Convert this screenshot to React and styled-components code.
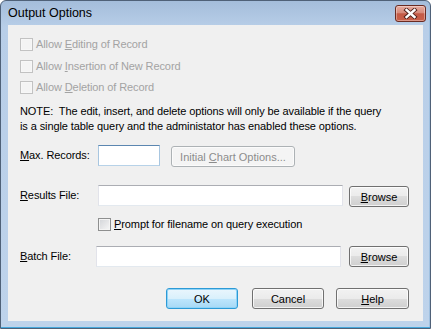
import React from 'react';
import styled, { createGlobalStyle, css } from 'styled-components';

const GlobalStyle = createGlobalStyle`
  html, body {
    margin: 0;
    padding: 0;
    background: #ffffff;
  }
  body {
    font-family: 'Liberation Sans', Arial, sans-serif;
    font-size: 11px;
    letter-spacing: -0.1px;
    color: #000000;
  }
`;

const Window = styled.div`
  box-sizing: border-box;
  width: 431px;
  height: 329px;
  display: flex;
  flex-direction: column;
  padding: 0 7px 7px;
  border: 1px solid #4f6178;
  border-radius: 6px 6px 0 0;
  background: linear-gradient(#a4bddb, #b8cee8 26px, #bed3eb);
  box-shadow: inset 0 -1px 0 #46a8dc, inset -1px 0 0 #9fc0e0;
`;

const TitleBar = styled.div`
  height: 24px;
  display: flex;
  align-items: flex-start;
  margin-right: -3px;
`;

const Caption = styled.div`
  flex: 1;
  padding-top: 5px;
  font-size: 12.5px;
  letter-spacing: 0;
  line-height: 15px;
  color: #000000;
`;

const CloseButton = styled.div`
  box-sizing: border-box;
  width: 31px;
  height: 17px;
  margin-top: 4px;
  display: flex;
  align-items: center;
  justify-content: center;
  border: 1px solid #6a2b22;
  border-radius: 3px;
  background: linear-gradient(#e6ab9f, #d78b7b 45%, #c35a46 52%, #c9604a);
  box-shadow: inset 0 0 0 1px rgba(255, 255, 255, 0.35);
`;

const Client = styled.div`
  flex: 1;
  display: flex;
  flex-direction: column;
  padding: 13px 14px 0 12px;
  background: #f0f0f0;
`;

const CheckList = styled.div`
  display: flex;
  flex-direction: column;
  gap: 8.5px;
`;

const CheckRow = styled.label`
  display: flex;
  align-items: center;
  height: 13px;
  line-height: 13px;
  color: ${({ disabled }) => (disabled ? '#a3a3a3' : '#000000')};
  ${({ indent }) =>
    indent &&
    css`
      margin-left: ${indent}px;
    `}
`;

const Box = styled.span`
  box-sizing: border-box;
  width: 13px;
  height: 13px;
  margin-right: 3px;
  border: 1px solid ${({ disabled }) => (disabled ? '#c2c2c2' : '#8e8f8f')};
  background: ${({ disabled }) =>
    disabled ? '#f4f4f4' : 'linear-gradient(135deg, #d2d4d8, #f7f7f7)'};
  box-shadow: inset 0 0 0 1px ${({ disabled }) => (disabled ? '#f7f7f7' : '#f4f4f4')};
`;

const Key = styled.span`
  text-decoration: underline;
  text-underline-offset: 1px;
`;

const Note = styled.p`
  margin: 10px 0 0;
  line-height: 15px;
`;

const FieldRow = styled.div`
  display: flex;
  align-items: flex-start;
  margin-top: ${({ top }) => top}px;
`;

const Label = styled.span`
  width: ${({ width }) => width || 78}px;
  height: 21px;
  line-height: 21px;
`;

const TextBox = styled.input`
  box-sizing: border-box;
  width: ${({ width }) => width}px;
  height: 21px;
  margin: 0;
  padding: 0 3px;
  font: inherit;
  background: #ffffff;
  border: 1px solid;
  border-color: #abadb3 #e2e3ea #e3e9ef #e2e3ea;
  outline: none;
  ${({ hot }) =>
    hot &&
    css`
      border-color: #5b86b0 #a8c6e0 #b7d2e8 #a8c6e0;
    `}
`;

const Button = styled.button`
  box-sizing: border-box;
  width: ${({ width }) => width}px;
  height: 21px;
  margin: ${({ offset }) => offset || 0}px 0 0 ${({ gap }) => gap || 0}px;
  padding: 0;
  font: inherit;
  color: #000000;
  border: 1px solid #707070;
  border-radius: 3px;
  background: linear-gradient(#f2f2f2, #ebebeb 50%, #dddddd 50%, #cfcfcf);
  box-shadow: inset 0 0 0 1px rgba(255, 255, 255, 0.75);
  ${({ primary }) =>
    primary &&
    css`
      border-color: #2c9ad6;
      background: linear-gradient(#eaf6fd, #d9f0fc 50%, #bee6fd 50%, #a7d9f5);
      box-shadow: inset 0 0 0 1px #8fd3f7;
    `}
  ${({ disabled }) =>
    disabled &&
    css`
      color: #8c8c8c;
      border-color: #adb2b5;
      background: #f4f4f4;
      box-shadow: inset 0 0 0 1px #fbfbfb;
    `}
`;

const Actions = styled.div`
  display: flex;
  justify-content: flex-end;
  margin-top: 21px;
`;

const CloseGlyph = () => (
  <svg width="15" height="11" viewBox="0 0 15 11">
    <path d="M3.5 2 L11.5 9 M11.5 2 L3.5 9" stroke="#4b1d17" strokeWidth="4.2" strokeLinecap="square" />
    <path d="M3.5 2 L11.5 9 M11.5 2 L3.5 9" stroke="#ffffff" strokeWidth="2.4" strokeLinecap="square" />
  </svg>
);

const Check = ({ disabled, indent, children }) => (
  <CheckRow disabled={disabled} indent={indent}>
    <Box disabled={disabled} />
    <span>{children}</span>
  </CheckRow>
);

export default function App() {
  return (
    <>
      <GlobalStyle />
      <Window>
        <TitleBar>
          <Caption>Output Options</Caption>
          <CloseButton>
            <CloseGlyph />
          </CloseButton>
        </TitleBar>
        <Client>
          <CheckList>
            <Check disabled>
              Allow <Key>E</Key>diting of Record
            </Check>
            <Check disabled>
              Allow <Key>I</Key>nsertion of New Record
            </Check>
            <Check disabled>
              Allow <Key>D</Key>eletion of Record
            </Check>
          </CheckList>
          <Note>
            NOTE:&nbsp; The edit, insert, and delete options will only be available if the query
            <br />
            is a single table query and the administator has enabled these options.
          </Note>
          <FieldRow top={11}>
            <Label>
              <Key>M</Key>ax. Records:
            </Label>
            <TextBox width={62} hot readOnly />
            <Button width={124} gap={11} offset={1} disabled>
              Initial <Key>C</Key>hart Options...
            </Button>
          </FieldRow>
          <FieldRow top={18}>
            <Label>
              <Key>R</Key>esults File:
            </Label>
            <TextBox width={245} readOnly />
            <Button width={60} gap={6} offset={1}>
              <Key>B</Key>rowse
            </Button>
          </FieldRow>
          <FieldRow top={11}>
            <Check indent={78}>
              <Key>P</Key>rompt for filename on query execution
            </Check>
          </FieldRow>
          <FieldRow top={15}>
            <Label width={76}>
              <Key>B</Key>atch File:
            </Label>
            <TextBox width={245} readOnly />
            <Button width={60} gap={8}>
              <Key>B</Key>rowse
            </Button>
          </FieldRow>
          <Actions>
            <Button width={72} primary>
              OK
            </Button>
            <Button width={72} gap={14}>
              Cancel
            </Button>
            <Button width={73} gap={12}>
              <Key>H</Key>elp
            </Button>
          </Actions>
        </Client>
      </Window>
    </>
  );
}
